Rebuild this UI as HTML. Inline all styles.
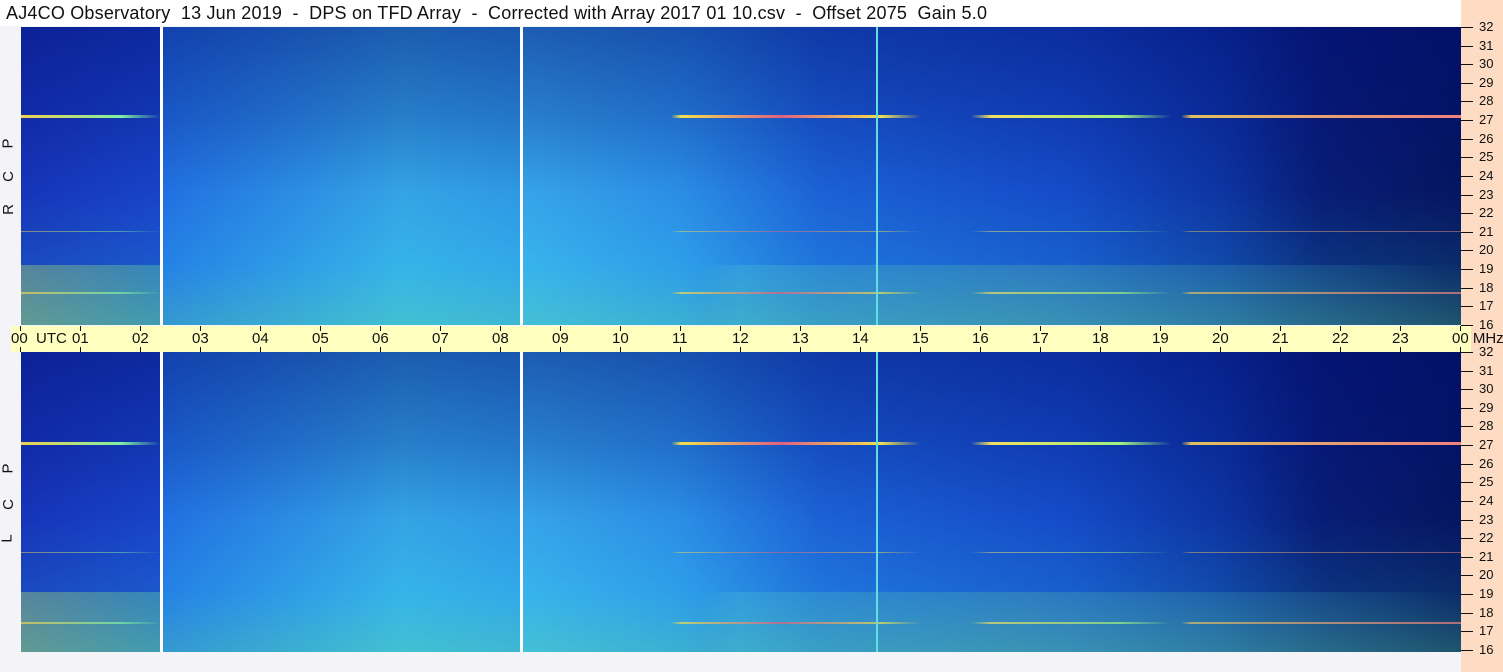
<!DOCTYPE html>
<html><head><meta charset="utf-8"><style>
html,body{margin:0;padding:0}
body{width:1503px;height:672px;position:relative;overflow:hidden;background:#f4f4f8;font-family:"Liberation Sans","DejaVu Sans",sans-serif}
.title{position:absolute;left:0;top:0;width:1461px;height:26px;background:#fff;font-size:18px;letter-spacing:0.2px;line-height:26px;padding-left:6px;box-sizing:border-box;color:#111;white-space:pre}
.right{position:absolute;left:1461px;top:0;width:42px;height:672px;background:#fddcc3}
.panel{position:absolute;left:21px;width:1440px;overflow:hidden;
background:
linear-gradient(to bottom,rgba(0,10,110,.5) 0%,rgba(0,10,110,.3) 30%,rgba(0,10,90,.08) 55%,rgba(40,200,180,.12) 80%,rgba(90,230,140,.3) 100%),
linear-gradient(to right,#1838c0 0,#1a48d0 139px,#2478ec 142px,#38b0f0 380px,#32a4f0 499px,#3ab0f4 502px,#2e98f0 660px,#1e68e0 800px,#1650d0 1050px,#0e38a8 1200px,#081e78 1300px,#061660 1440px)}
.p1{top:27px;height:298px}
.p2{top:352px;height:300px}
.vl{position:absolute;top:0;width:3px;height:100%;background:#fff}
.band{position:absolute;left:0;width:1440px;height:3px;background:linear-gradient(to right,#f0d050 0,#80f0a0 100px,rgba(0,0,0,0) 140px,rgba(0,0,0,0) 650px,#f0e050 660px,#e06080 760px,#f0e050 860px,rgba(0,0,0,0) 900px,rgba(0,0,0,0) 950px,#f0e060 970px,#a0f080 1100px,rgba(0,0,0,0) 1150px,rgba(0,0,0,0) 1160px,#e0c060 1170px,#f08080 1440px)}
.lo{position:absolute;left:0;width:1440px;height:60px;background:linear-gradient(to right,rgba(200,240,90,.35) 0,rgba(110,240,150,.3) 139px,rgba(0,0,0,0) 142px,rgba(0,0,0,0) 680px,rgba(90,220,200,.2) 720px,rgba(120,230,140,.2) 1000px,rgba(80,200,200,.15) 1300px,rgba(0,0,0,0) 1440px)}
.axis{position:absolute;left:11px;top:326px;width:1460px;height:26px;background:#ffffc0}
.tl{position:absolute;top:4px;font-size:15px;color:#111}
.tk{position:absolute;width:1px;height:5px;background:#111}
.fl{position:absolute;left:1479px;font-size:13px;color:#111}
.ft{position:absolute;left:1461px;width:12px;height:1px;background:#111}
.side{position:absolute;left:3px;font-size:15px;color:#111;transform:rotate(-90deg)}
</style></head><body>
<div class="title">AJ4CO Observatory  13 Jun 2019  -  DPS on TFD Array  -  Corrected with Array 2017 01 10.csv  -  Offset 2075  Gain 5.0</div>
<div class="right"></div>
<div class="panel p1">
<div class="lo" style="top:238px"></div>
<div class="band" style="top:88px"></div>
<div class="band" style="top:265px;height:2px;opacity:.7"></div>
<div class="band" style="top:204px;height:1px;opacity:.5"></div>
<div class="vl" style="left:139px"></div><div class="vl" style="left:499px"></div>
<div class="vl" style="left:855px;width:2px;background:#60e0e0"></div>
</div>
<div class="panel p2">
<div class="lo" style="top:240px"></div>
<div class="band" style="top:90px"></div>
<div class="band" style="top:270px;height:2px;opacity:.7"></div>
<div class="band" style="top:200px;height:1px;opacity:.5"></div>
<div class="vl" style="left:139px"></div><div class="vl" style="left:499px"></div>
<div class="vl" style="left:855px;width:2px;background:#60e0e0"></div>
</div>
<div class="axis" id="ax"></div>
<div class="side" style="top:135px">P</div>
<div class="side" style="top:168px">C</div>
<div class="side" style="top:201px">R</div>
<div class="side" style="top:460px">P</div>
<div class="side" style="top:496px">C</div>
<div class="side" style="top:530px">L</div>
<script>
var ax=document.getElementById('ax'),h='';
for(var i=0;i<=24;i++){var x=9+i*60;
h+='<div class="tk" style="left:'+x+'px;top:0"></div><div class="tk" style="left:'+x+'px;top:21px"></div>';
var t=i==24?'00 MHz':(i<10?'0'+i:''+i);if(i==0)t='00  UTC';
h+='<div class="tl" style="left:'+(x-(i==0?9:8))+'px;white-space:pre">'+t+'</div>';}
ax.innerHTML=h;var b='';
for(var f=32;f>=16;f--){var y1=27+(32-f)*18.62,y2=352+(32-f)*18.62;
b+='<div class="ft" style="top:'+y1+'px"></div><div class="fl" style="top:'+(y1-8)+'px">'+f+'</div>';
b+='<div class="ft" style="top:'+y2+'px"></div><div class="fl" style="top:'+(y2-8)+'px">'+f+'</div>';}
document.body.insertAdjacentHTML('beforeend',b);
</script>
</body></html>
